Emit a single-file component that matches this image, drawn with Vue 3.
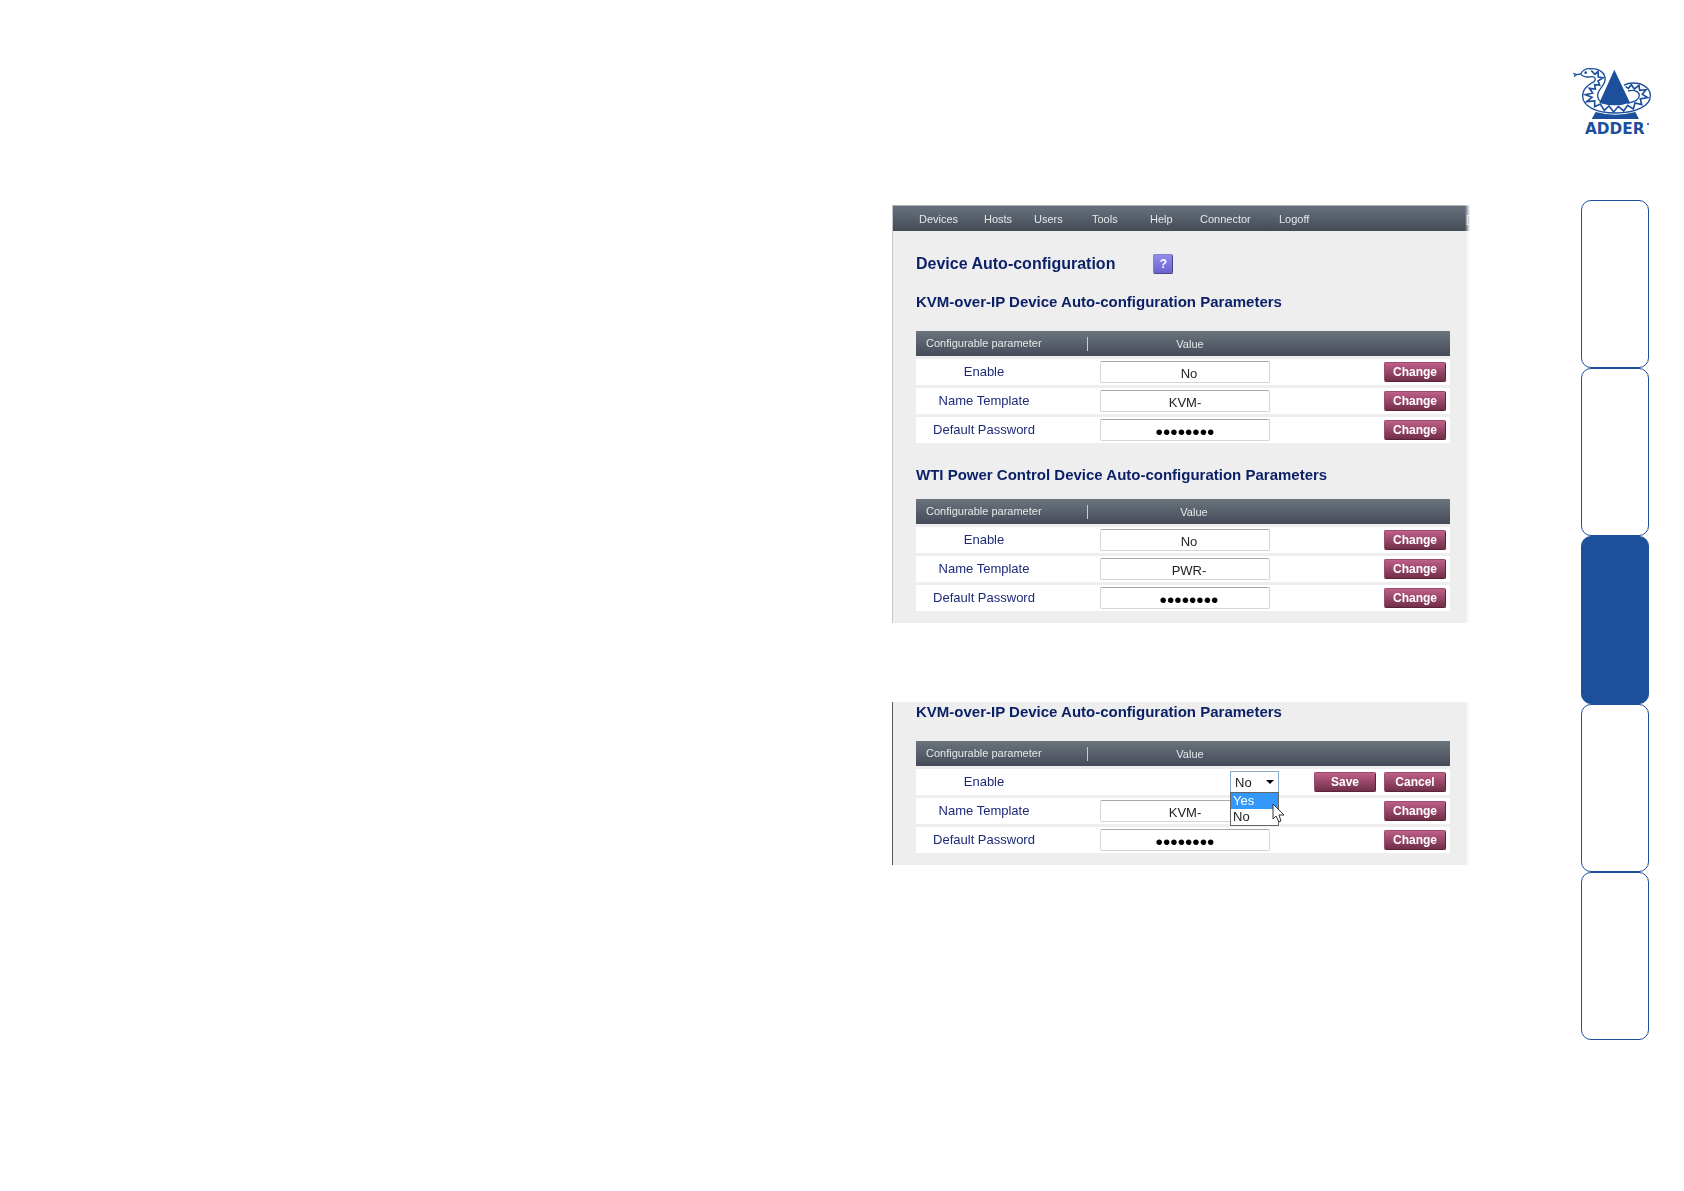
<script setup>
import { ref } from 'vue'

const links = ['Devices', 'Hosts', 'Users', 'Tools', 'Help', 'Connector', 'Logoff', '[']

const sections = ref([
  {
    id: 'kvm',
    title: 'KVM-over-IP Device Auto-configuration Parameters',
    rows: [
      { id: 'kvm-enable', label: 'Enable', value: 'No', type: 'text', shifted: true },
      { id: 'kvm-name', label: 'Name Template', value: 'KVM-', type: 'text' },
      { id: 'kvm-password', label: 'Default Password', value: 'password', type: 'password' },
    ],
  },
  {
    id: 'wti',
    title: 'WTI Power Control Device Auto-configuration Parameters',
    shifted: true,
    rows: [
      { id: 'wti-enable', label: 'Enable', value: 'No', type: 'text', shifted: true },
      { id: 'wti-name', label: 'Name Template', value: 'PWR-', type: 'text', shifted: true },
      { id: 'wti-password', label: 'Default Password', value: 'password', type: 'password', shifted: true },
    ],
  },
])

const editing = ref({
  id: 'edit',
  title: 'KVM-over-IP Device Auto-configuration Parameters',
  rows: [
    { id: 'edit-enable', label: 'Enable', value: 'No', type: 'select' },
    { id: 'edit-name', label: 'Name Template', value: 'KVM-', type: 'text' },
    { id: 'edit-password', label: 'Default Password', value: 'password', type: 'password' },
  ],
})

const panels = [
  { id: 'full', nav: true, sections: sections.value },
  { id: 'edit', nav: false, sections: [editing.value] },
]

const options = ['Yes', 'No']
const hovered = ref('Yes')

const tabs = [1, 2, 3, 4, 5]
const activeTab = ref(3)

const choose = (row, option) => {
  row.value = option
}
</script>

<template>
  <div class="page">
    <header class="header">
      <svg class="logo" viewBox="36 30 240 216" role="img" aria-label="Adder">
        <path class="fill" d="M107 171 Q165 187 226 171 L237 192 L95 192 Z" />
        <!-- snake body -->
        <path
          class="line"
          d="M92 41 C120 40 138 56 135 76 C134 92 113 104 113 121 C113 134 121 141 130 145 M203 145 C224 141 238 133 238 121 C238 109 222 103 204 108"
        />
        <path
          class="line"
          d="M94 65 C107 65 109 73 102 80 C83 91 68 101 68 124 C68 153 107 174 167 174 C228 174 271 153 271 122 C271 98 246 84 220 84 C208 84 198 87 192 91"
        />
        <path
          class="zigzag"
          d="M94 47 L105 58 L114 49 L115 66 L129 68 L114 78 L119 90 L104 89 L106 102 L88 100 L98 114 L76 119 L96 127 L80 140 L104 138 L104 155 L121 147 L133 166 L147 153 L161 171 L175 154 L191 168 L203 151 L220 162 L225 144 L245 149 L241 132 L263 128 L247 118 L258 104 L239 106 L237 91 L223 102 L214 89 L205 100 L197 95"
        />
        <path class="fill" d="M163 44 L118 143 Q163 159 210 143 Z" />
        <!-- head and tongue -->
        <path class="line" d="M94 42 C80 38 67 45 62 57 C68 66 84 68 97 64" />
        <path class="line" d="M62 57 L50 59 L40 55 M50 59 L42 64" />
        <circle class="fill" cx="77" cy="53" r="4" />
        <text class="brand" x="75" y="237">ADDER</text>
        <circle class="dot" cx="264" cy="207" r="3" />
      </svg>
    </header>

    <div class="columns">
      <main class="content">
        <section v-for="panel in panels" :key="panel.id" class="panel" :class="'panel--' + panel.id">
          <nav v-if="panel.nav" class="menu">
            <a v-for="link in links" :key="link" href="#">{{ link }}</a>
          </nav>
          <div class="body">
            <div v-if="panel.nav" class="title">
              <h1>Device Auto-configuration</h1>
              <button class="help" type="button">?</button>
            </div>
            <div v-for="section in panel.sections" :key="section.id" class="section">
              <h2>{{ section.title }}</h2>
              <table>
                <colgroup>
                  <col class="col-label" />
                  <col class="col-value" />
                  <col />
                </colgroup>
                <thead>
                  <tr>
                    <th class="head-label">Configurable parameter</th>
                    <th class="head-value" :class="{ shifted: section.shifted }">Value</th>
                    <th></th>
                  </tr>
                </thead>
                <tbody>
                  <tr v-for="row in section.rows" :key="row.id">
                    <td class="cell-label">
                      <label :for="row.id">{{ row.label }}</label>
                    </td>
                    <td class="cell-value">
                      <div v-if="row.type === 'select'" class="dropdown">
                        <select :id="row.id" v-model="row.value">
                          <option v-for="option in options" :key="option">{{ option }}</option>
                        </select>
                        <ul class="options">
                          <li
                            v-for="option in options"
                            :key="option"
                            :class="{ hovered: hovered === option }"
                            @mouseenter="hovered = option"
                            @click="choose(row, option)"
                          >
                            {{ option }}
                          </li>
                        </ul>
                        <svg class="cursor" viewBox="0 0 13 20">
                          <path d="M1 1 V16 L4 13 L7 19 L9 18 L7 12 H12 Z" />
                        </svg>
                      </div>
                      <input
                        v-else
                        :id="row.id"
                        v-model="row.value"
                        :type="row.type"
                        :class="{ shifted: row.shifted }"
                      />
                    </td>
                    <td class="cell-actions">
                      <div class="actions">
                        <template v-if="row.type === 'select'">
                          <button class="btn" type="button">Save</button>
                          <button class="btn" type="button">Cancel</button>
                        </template>
                        <button v-else class="btn" type="button">Change</button>
                      </div>
                    </td>
                  </tr>
                </tbody>
              </table>
            </div>
          </div>
        </section>
      </main>

      <nav class="tabs">
        <a
          v-for="tab in tabs"
          :key="tab"
          href="#"
          class="tab"
          :class="{ active: activeTab === tab }"
          @click.prevent="activeTab = tab"
        ></a>
      </nav>
    </div>
  </div>
</template>

<style>
body {
  margin: 0;
  background: #fff;
}
</style>

<style scoped>
* {
  box-sizing: border-box;
}

.page {
  font-family: 'Liberation Sans', Arial, sans-serif;
  font-size: 13px;
  padding: 65px 32px 150px 0;
}

.header {
  display: flex;
  justify-content: flex-end;
  height: 135px;
}

.logo {
  width: 80px;
  height: 72px;
  overflow: visible;
}
.fill,
.dot {
  fill: #1c4f9c;
}
.line,
.zigzag {
  fill: none;
  stroke: #1c4f9c;
  stroke-width: 4;
  stroke-linejoin: round;
}
.zigzag {
  stroke-width: 5;
  stroke-linejoin: miter;
}
.brand {
  font-family: 'DejaVu Sans', sans-serif;
  font-size: 46px;
  font-weight: 700;
  fill: #1c4f9c;
}

.columns {
  display: grid;
  grid-template-columns: 892fr 578fr 111fr 68fr;
  padding-right: 3px;
}
.content {
  grid-column: 2;
  padding-top: 5px;
}

.panel {
  background: #eee;
  border-left: 1px solid #c4c6c9;
  mask-image: linear-gradient(to left, transparent, #000 5px);
}
.panel--edit {
  margin-top: 79px;
  border-left-color: #55585c;
}

.menu {
  display: grid;
  grid-template-columns: 65px 50px 58px 58px 50px 79px 1fr 4px;
  align-items: center;
  height: 26px;
  padding-left: 26px;
  border-top: 1px solid #a9afb9;
  background: linear-gradient(#68707d, #434c55);
  overflow: hidden;
}
.menu a {
  font-size: 11px;
  color: #e6e8ea;
  text-decoration: none;
}

.body {
  padding: 0 20px 9px 23px;
}
.title {
  display: flex;
  align-items: center;
  gap: 38px;
  padding-top: 22px;
}
h1,
h2 {
  margin: 0;
  color: #0b1f66;
}
h1 {
  font-size: 16px;
  line-height: 22px;
}
h2 {
  font-size: 15px;
  line-height: 20px;
}
.help {
  width: 20px;
  height: 20px;
  padding: 0;
  border: 1px solid #8580d0;
  border-right-color: #4a4688;
  border-bottom-color: #4a4688;
  border-radius: 2px;
  background: linear-gradient(#928cec, #6c62d0);
  color: #fff;
  font: bold 12px 'Liberation Sans', Arial, sans-serif;
}

.section h2 {
  padding-top: 17px;
  padding-bottom: 16px;
}
.section + .section h2 {
  padding-top: 19px;
  padding-bottom: 11px;
}
.panel--edit h2 {
  padding-top: 0;
}

table {
  width: 100%;
  table-layout: fixed;
  border-spacing: 0 3px;
}
.col-label {
  width: 172px;
}
.col-value {
  width: 200px;
}
th {
  height: 25px;
  padding: 0;
  font-size: 11px;
  font-weight: 400;
  color: #e6e8ea;
  background: linear-gradient(#6b757d, #454a58);
}
.head-label {
  padding-left: 10px;
  text-align: left;
}
.head-label::after {
  content: '';
  float: right;
  width: 1px;
  height: 14px;
  background: #c9cdd2;
}
.head-value {
  padding-left: 4px;
}
.head-value.shifted {
  padding-left: 12px;
}
td {
  height: 26px;
  padding: 0;
  background: #fff;
}
.cell-label {
  padding-right: 36px;
  padding-bottom: 2px;
  text-align: center;
  color: #1d2a78;
}
.cell-value {
  padding: 0 9px 0 12px;
}
input {
  display: block;
  width: 170px;
  height: 22px;
  padding: 3px 0 0;
  border: 1px solid #d4d4d8;
  border-top-color: #a8a8ac;
  border-radius: 2px;
  background: #fff;
  color: #222;
  font: 13px 'Liberation Sans', Arial, sans-serif;
  text-align: center;
}
input.shifted {
  padding-left: 8px;
}
input[type='password'] {
  color: #000;
  font-size: 21px;
}

.actions {
  display: flex;
  justify-content: flex-end;
  gap: 8px;
  padding-right: 4px;
}
.btn {
  width: 62px;
  height: 20px;
  padding: 0;
  border: 1px solid #a04a70;
  border-right-color: #5a2338;
  border-bottom-color: #5a2338;
  border-radius: 2px;
  background: linear-gradient(#be5f88, #712f48);
  color: #fff;
  font: bold 12px 'Liberation Sans', Arial, sans-serif;
}

.dropdown {
  position: relative;
  width: 49px;
  margin-left: auto;
}
.dropdown::after {
  content: '';
  position: absolute;
  top: 9px;
  right: 5px;
  border: 4px solid transparent;
  border-top-color: #000;
  border-bottom: 0;
  pointer-events: none;
}
select {
  display: block;
  width: 49px;
  height: 22px;
  padding: 0 4px;
  appearance: none;
  border: 1px solid #86acd0;
  border-radius: 0;
  background: #fff;
  color: #222;
  font: 13px 'Liberation Sans', Arial, sans-serif;
}
.options {
  position: absolute;
  z-index: 1;
  top: 21px;
  left: 0;
  width: 49px;
  margin: 0;
  padding: 0;
  border: 1px solid #666;
  background: #fff;
  list-style: none;
  line-height: 16px;
  color: #222;
}
.options li {
  padding-left: 2px;
}
.options .hovered {
  background: #3498fb;
  color: #fff;
}
.cursor {
  position: absolute;
  z-index: 2;
  top: 32px;
  left: 42px;
  width: 13px;
  height: 20px;
  fill: #fff;
  stroke: #333;
}

.tabs {
  grid-column: 4;
  display: flex;
  flex-direction: column;
}
.tab {
  height: 168px;
  border: 1px solid #1c4f9c;
  border-radius: 10px;
}
.tab.active {
  background: #1c4f9c;
}
</style>
